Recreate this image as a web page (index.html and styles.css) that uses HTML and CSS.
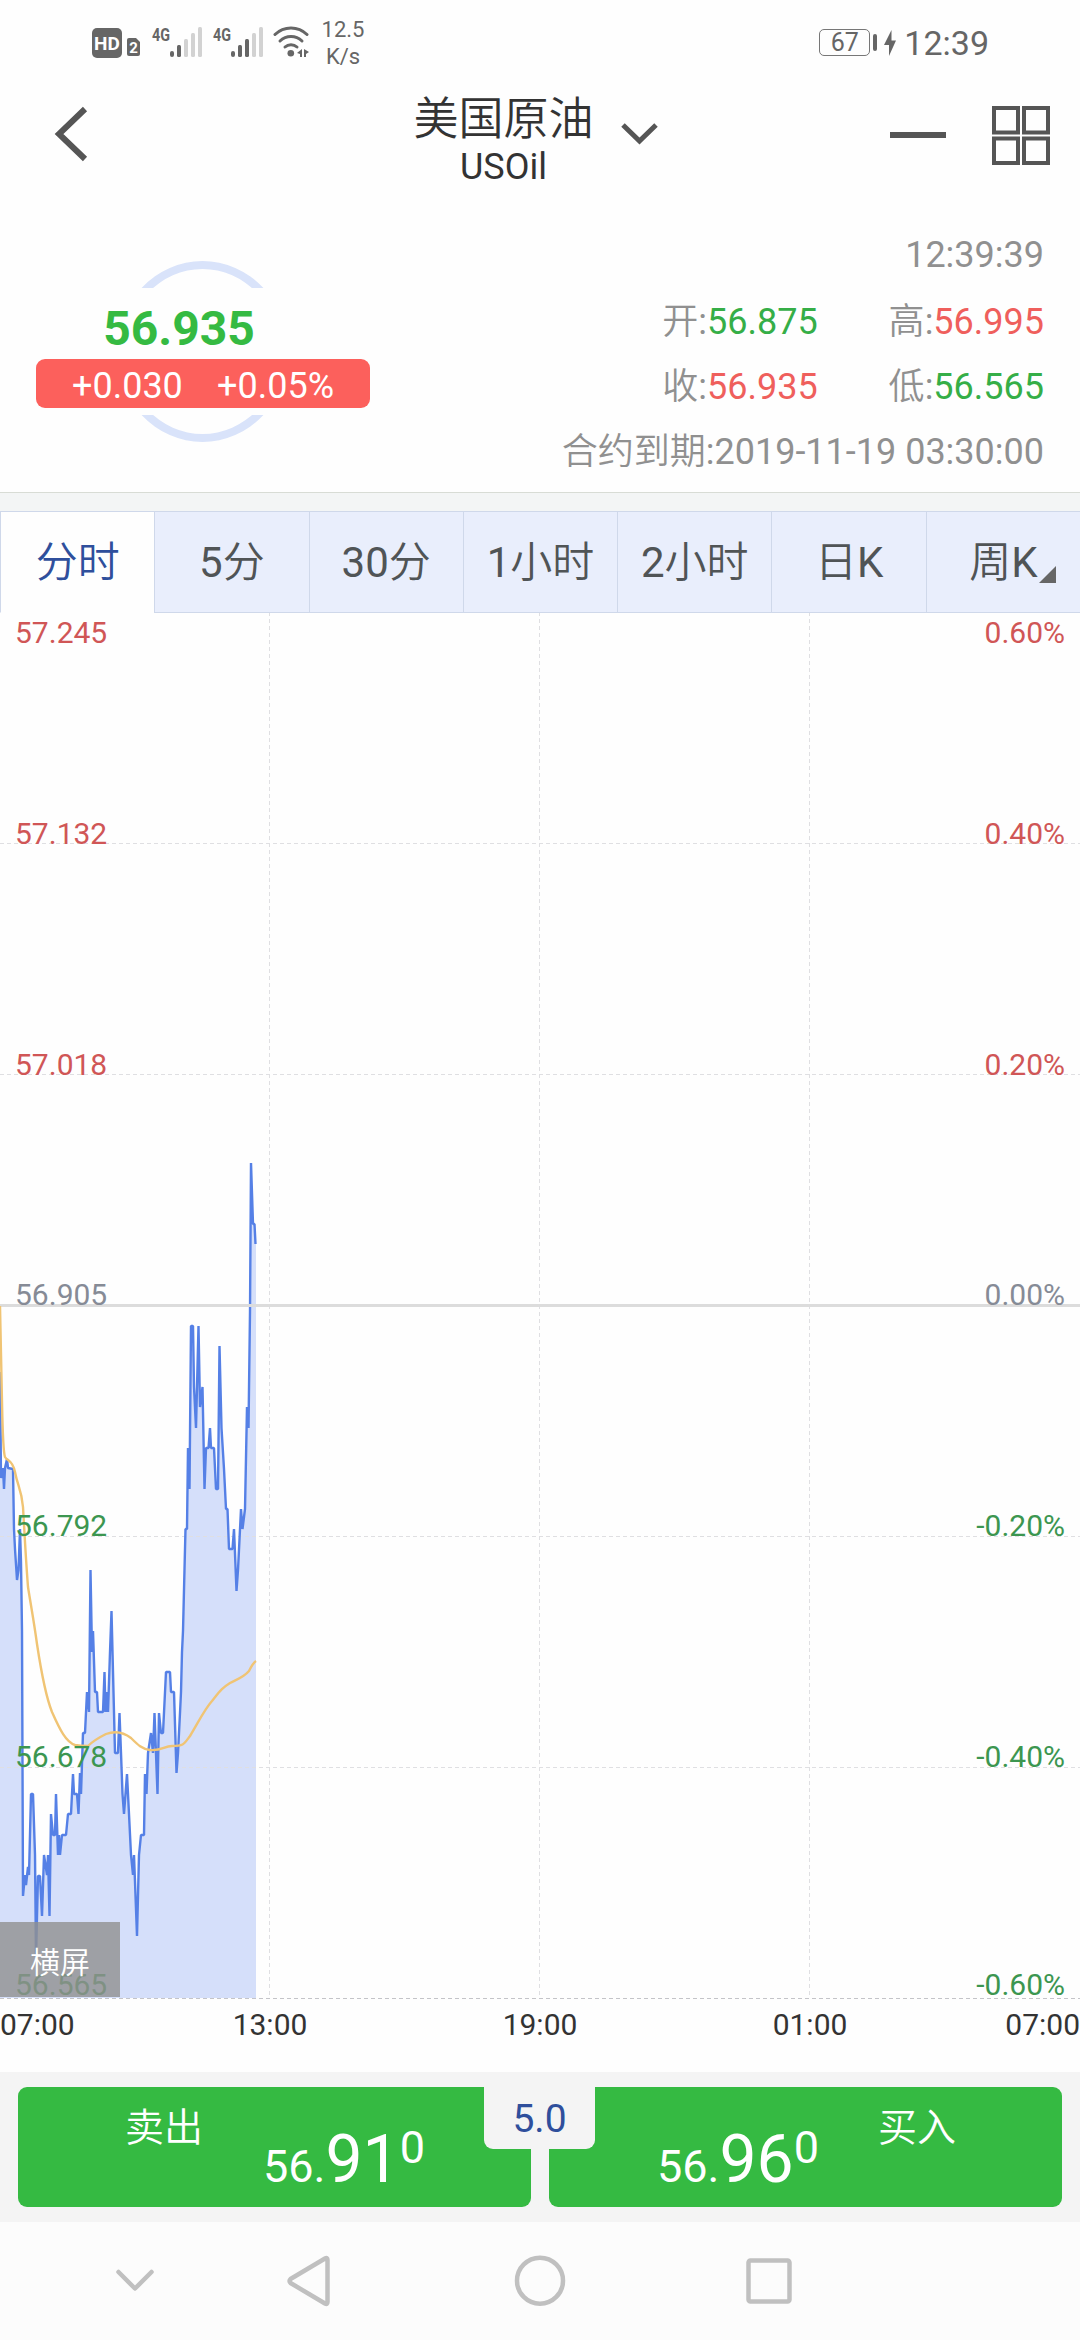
FILE: index.html
```html
<!DOCTYPE html>
<html lang="zh-CN">
<head>
    <meta charset="UTF-8">
    <meta name="viewport" content="width=device-width, initial-scale=1.0">
    <title>美国原油 USOil</title>
    <link rel="stylesheet" href="styles.css">
</head>
<body>

    <!-- Status bar -->
    <div class="status-bar">
        <div class="status-left">
            <span class="hd-badge">HD</span>
            <svg class="sim" width="13" height="18" viewBox="0 0 13 18">
                <path d="M2 0H9L13 4V16Q13 18 11 18H2Q0 18 0 16V2Q0 0 2 0Z" fill="#666"/>
                <text x="6.5" y="14.5" text-anchor="middle" class="sim-num">2</text>
            </svg>
            <svg class="signal" width="50" height="32" viewBox="0 0 50 32">
                <text x="0" y="15" class="net" textLength="18" lengthAdjust="spacingAndGlyphs">4G</text>
                <g fill="#666">
                    <rect x="18" y="25" width="4" height="6" rx="2"/>
                    <rect x="25" y="19" width="4" height="12" rx="1.5"/>
                </g>
                <g fill="#d2d2d2">
                    <rect x="32" y="13" width="4" height="18" rx="1.5"/>
                    <rect x="39" y="7" width="4" height="24" rx="1.5"/>
                    <rect x="46" y="1" width="4" height="30" rx="1.5"/>
                </g>
            </svg>
            <svg class="signal second" width="50" height="32" viewBox="0 0 50 32">
                <text x="0" y="15" class="net" textLength="18" lengthAdjust="spacingAndGlyphs">4G</text>
                <g fill="#666">
                    <rect x="18" y="25" width="4" height="6" rx="2"/>
                    <rect x="25" y="19" width="4" height="12" rx="1.5"/>
                    <rect x="32" y="13" width="4" height="18" rx="1.5"/>
                </g>
                <g fill="#d2d2d2">
                    <rect x="39" y="7" width="4" height="24" rx="1.5"/>
                    <rect x="46" y="1" width="4" height="30" rx="1.5"/>
                </g>
            </svg>
            <svg class="wifi" width="37" height="32" viewBox="0 0 37 32">
                <g fill="none" stroke="#666" stroke-width="3" stroke-linecap="round">
                    <path d="M2 8.500A23 23 0 0 1 34 8.500"/>
                    <path d="M7 15A16 16 0 0 1 29 15"/>
                    <path d="M12 21A9 9 0 0 1 24 21"/>
                </g>
                <circle cx="17.8" cy="27.3" r="3.3" fill="#666"/>
                <path d="M24 27L29 23V31H27V28ZM31 31V23L36 26L33 28V31Z" fill="#666"/>
            </svg>
            <div class="net-speed">12.5<br>K/s</div>
        </div>
        <div class="status-right">
            <span class="battery">67</span>
            <span class="battery-cap"></span>
            <svg class="bolt" width="12" height="26" viewBox="0 0 12 26"><path d="M7.5 0V10.5H12L5 26V15H0Z" fill="#666"/></svg>
            <span class="clock">12:39</span>
        </div>
    </div>

    <!-- Title bar -->
    <header class="header">
        <svg class="back" width="34" height="56" viewBox="0 0 34 56"><path d="M31 3L5 28L31 53" fill="none" stroke="#555" stroke-width="6"/></svg>
        <div class="symbol">
            <div class="symbol-names">
                <h1 class="cn">美国原油</h1>
                <p>USOil</p>
            </div>
            <svg class="symbol-arrow" width="37" height="22" viewBox="0 0 37 22"><path d="M2 2L18.500 18L35 2" fill="none" stroke="#555" stroke-width="5"/></svg>
        </div>
        <div class="header-actions">
            <span class="minus"></span>
            <svg width="58" height="60" viewBox="0 0 58 60">
                <g fill="none" stroke="#555" stroke-width="4">
                    <rect x="2" y="2" width="24" height="24.500"/>
                    <rect x="32" y="2" width="24" height="24.500"/>
                    <rect x="2" y="32.500" width="24" height="24.500"/>
                    <rect x="32" y="32.500" width="24" height="24.500"/>
                </g>
            </svg>
        </div>
    </header>

    <!-- Quote -->
    <section class="quote">
        <div class="quote-left">
            <div class="ring"></div>
            <div class="quote-now">
                <div class="price">56.935</div>
                <div class="change"><span>+0.030</span><span>+0.05%</span></div>
            </div>
        </div>
        <div class="quote-right">
            <div class="time">12:39:39</div>
            <div class="row">
                <div><span class="cn">开</span>:<b class="down">56.875</b></div>
                <div><span class="cn">高</span>:<b class="up">56.995</b></div>
            </div>
            <div class="row">
                <div><span class="cn">收</span>:<b class="up">56.935</b></div>
                <div><span class="cn">低</span>:<b class="down">56.565</b></div>
            </div>
            <div class="row"><div><span class="cn">合约到期</span>:2019-11-19 03:30:00</div></div>
        </div>
    </section>

    <!-- Period tabs -->
    <nav class="tabs">
        <a class="tab active"><span class="cn">分时</span></a>
        <a class="tab">5<span class="cn">分</span></a>
        <a class="tab">30<span class="cn">分</span></a>
        <a class="tab">1<span class="cn">小时</span></a>
        <a class="tab">2<span class="cn">小时</span></a>
        <a class="tab"><span class="cn">日</span>K</a>
        <a class="tab more"><span class="cn">周</span>K</a>
    </nav>

    <!-- Chart -->
    <main class="chart">
        <svg width="1080" height="1459" viewBox="0 1 1080 1459">
            <path class="area" id="area"/>
            <g class="grid">
                <path d="M0 231.500H1080M0 462.500H1080M0 924.500H1080M0 1155.500H1080"/>
                <path d="M269.500 0V1386M539.500 0V1386M809.500 0V1386"/>
                <path class="base" d="M0 1386.500H1080"/>
            </g>
            <path class="line" id="line"/>
            <path class="zero" d="M0 693.500H1080"/>
            <path class="avg" d="M0 694L2 790Q3 840 5 845C8 850 12 847 15 860C18 876 21 875 23 895C25 930 26 950 28 975C32 1000 34 1010 37 1032C42 1065 46 1085 52 1100C60 1118 66 1130 75 1133C80 1134 84 1134 88 1134C94 1128 100 1125 106 1122C114 1119 122 1119 131 1126C138 1133 142 1137 150 1138C162 1139 164 1134 172 1134C184 1134 184 1132 190 1124C198 1111 204 1098 212 1089C220 1079 222 1076 230 1071C238 1067 244 1065 249 1059Q253 1051 256 1049"/>
            <g class="y-axis">
                <g class="red">
                    <text x="15" y="31">57.245</text>
                    <text x="15" y="232">57.132</text>
                    <text x="15" y="463">57.018</text>
                </g>
                <text class="gray" x="15" y="693">56.905</text>
                <g class="green">
                    <text x="15" y="924">56.792</text>
                    <text x="15" y="1155">56.678</text>
                    <text x="15" y="1383">56.565</text>
                </g>
            </g>
            <g class="y-axis right">
                <g class="red">
                    <text x="1065" y="31">0.60%</text>
                    <text x="1065" y="232">0.40%</text>
                    <text x="1065" y="463">0.20%</text>
                </g>
                <text class="gray" x="1065" y="693">0.00%</text>
                <g class="green">
                    <text x="1065" y="924">-0.20%</text>
                    <text x="1065" y="1155">-0.40%</text>
                    <text x="1065" y="1383">-0.60%</text>
                </g>
            </g>
            <g class="x-axis">
                <text x="0" y="1423">07:00</text>
                <text x="270" y="1423" text-anchor="middle">13:00</text>
                <text x="540" y="1423" text-anchor="middle">19:00</text>
                <text x="810" y="1423" text-anchor="middle">01:00</text>
                <text x="1080" y="1423" text-anchor="end">07:00</text>
            </g>
        </svg>
        <button class="landscape cn">横屏</button>
    </main>

    <!-- Trade buttons -->
    <section class="trade">
        <div class="trade-btn sell">
            <span class="cn">卖出</span>
            <div class="trade-price">56.<big>91</big><sup>0</sup></div>
        </div>
        <div class="trade-btn buy">
            <div class="trade-price">56.<big>96</big><sup>0</sup></div>
            <span class="cn">买入</span>
        </div>
        <div class="spread">5.0</div>
    </section>

    <!-- System navigation -->
    <footer class="sys-nav">
        <svg width="1080" height="118" viewBox="0 0 1080 118">
            <g fill="none" stroke="#c0c0c0" stroke-width="4.500" stroke-linejoin="round" stroke-linecap="round">
                <path d="M118.500 50L135 66.500L151.500 50"/>
                <path d="M325 36.500Q327.500 35 327.500 38V80Q327.500 83 325 81.500L290.500 61Q288.500 59 290.500 57Z"/>
                <circle cx="540" cy="58.700" r="23"/>
                <rect x="748.500" y="38.500" width="41" height="41" rx="2"/>
            </g>
        </svg>
    </footer>

    <script>
        // Minute line: [x, y] pairs in chart coordinates
        const points = [
            [0,760],[1,866],[3,856],[4,877],[5,856],[7,847],[8,856],[13,857],[14,917],[15,937],[17,968],[18.5,958],[20,917],
            [21,950],[22,1019],[23,1284],[25,1263],[26,1273],[28,1255],[29,1263],[31,1182],[33,1182],[35,1243],[36,1345],
            [38,1264],[40,1264],[42,1304],[44,1243],[47,1263],[48,1243],[49.5,1304],[51,1202],[53,1223],[55,1223],[56,1182],
            [58,1243],[59,1223],[60,1243],[62,1223],[66,1223],[68,1202],[71,1202],[73,1162],[74,1182],[77,1182],[78.5,1202],
            [80,1161],[81,1182],[83,1121],[85,1121],[87,1080],[89,1100],[90.5,958],[92,1040],[93,1019],[95,1080],[97,1080],
            [98,1100],[103,1100],[104.5,1060],[105.5,1100],[107,1080],[108,1100],[110,1040],[111.5,999],[113,1060],[115,1141],
            [118,1141],[119.5,1101],[121,1141],[122.5,1182],[124,1202],[127,1162],[129,1202],[131,1243],[133,1263],[134,1243],
            [137,1324],[139,1243],[141,1223],[144,1223],[145,1162],[146.5,1182],[148,1141],[151,1121],[153,1141],[154.5,1101],
            [157.5,1182],[159,1101],[161,1121],[163,1121],[166,1060],[170,1060],[171,1080],[174,1080],[176.5,1161],[178,1141],
            [180,1101],[181,1080],[182,1040],[183,1019],[185,937],[185.5,917],[187,917],[188,836],[189.5,877],[191,714],
            [193,714],[194,775],[196,816],[198.5,714],[200,795],[202.5,775],[204.5,877],[206,836],[208.5,836],[210,816],
            [211,836],[214,836],[216,877],[218,877],[219.5,734],[221.5,816],[224,857],[226,897],[227.5,897],[229,937],
            [232.5,937],[234,917],[236.5,979],[238,958],[241,897],[242.5,917],[245,897],[247,795],[248.5,816],[250,700],
            [251,551],[253,612],[254.5,612],[255.5,632]
        ];

        const line = 'M' + points.map(p => p.join(' ')).join('L');
        document.getElementById('line').setAttribute('d', line);
        document.getElementById('area').setAttribute('d', line + 'H256V1386H0Z');
    </script>
</body>
</html>
```
FILE: styles.css
```css
:root {
    --green: #35ba42;
    --red: #fc605c;
    --blue: #2f4f9c;
    --dark: #555;
    --grey: #909090;
}

* {
    margin: 0;
    padding: 0;
    box-sizing: border-box;
}

body {
    width: 1080px;
    background-color: #fefefe;
    font-family: Roboto, "Noto Sans CJK SC", sans-serif;
    color: #333;
}

svg {
    display: block;
}

.cn {
    font-family: Roboto, "Noto Sans CJK SC", sans-serif;
    font-weight: 350;
}

/* Status bar */
.status-bar {
    height: 72px;
    display: flex;
    justify-content: space-between;
    padding: 0 92px;
    color: #666;
}

.status-left, .status-right {
    display: flex;
    align-items: flex-start;
}

.hd-badge {
    width: 30px;
    height: 30px;
    margin-top: 28px;
    border-radius: 5px;
    background-color: #666;
    color: #fff;
    font-size: 19px;
    font-weight: 700;
    line-height: 31px;
    text-align: center;
}

.sim {
    margin: 38px 12px 0 5px;
}

.sim-num {
    font-size: 15px;
    font-weight: 700;
    fill: #fff;
}

.net {
    font-size: 19px;
    font-weight: 700;
    fill: #666;
}

.signal {
    margin-top: 26px;
    overflow: visible;
}

.signal.second {
    margin-left: 11px;
}

.wifi {
    margin: 26px 0 0 10px;
}

.net-speed {
    width: 50px;
    margin: 16px 0 0 8px;
    font-size: 22px;
    line-height: 27px;
    text-align: center;
}

.status-right {
    margin-right: -1px;
}

.battery {
    width: 51px;
    height: 27px;
    margin-top: 29px;
    border: 1.500px solid #777;
    border-radius: 5px;
    font-size: 25px;
    line-height: 25px;
    text-align: center;
}

.battery-cap {
    width: 4px;
    height: 17px;
    margin: 34px 7px 0 3px;
    border-radius: 2px;
    background-color: #666;
}

.bolt {
    margin: 30px 8px 0 0;
}

.clock {
    margin-top: 22px;
    font-size: 34px;
    line-height: 42px;
}

/* Title bar */
.header {
    height: 149px;
    display: grid;
    grid-template-columns: 1fr auto 1fr;
    align-items: start;
    padding: 20px 30px 0 54px;
}

.back {
    margin-top: 14px;
}

.symbol {
    display: flex;
    margin-left: -24px;
}

.symbol-names {
    padding-top: 1px;
    text-align: center;
}

.symbol h1 {
    font-size: 45px;
    line-height: 53px;
}

.symbol p {
    font-size: 36px;
    line-height: 42px;
}

.symbol-arrow {
    margin: 31px 9px 0 27px;
}

.header-actions {
    display: flex;
    justify-content: flex-end;
    gap: 46px;
    padding-top: 14px;
}

.minus {
    width: 56px;
    height: 6px;
    margin-top: 26px;
    background-color: var(--dark);
}

/* Quote */
.quote {
    height: 272px;
    display: flex;
    justify-content: space-between;
    padding: 0 36px;
    border-bottom: 1px solid #d8dcd5;
}

.quote-left {
    position: relative;
    width: 334px;
    padding-top: 67px;
}

.ring {
    position: absolute;
    top: 40px;
    left: 81px;
    width: 171px;
    height: 181px;
    border: 8px solid #d9e3fa;
    border-radius: 50%;
}

.quote-now {
    position: relative;
    height: 127px;
    background-color: #fefefe;
}

.price {
    padding: 11px 48px 0 0;
    font-size: 48px;
    font-weight: 700;
    line-height: 60px;
    text-align: center;
    color: var(--green);
}

.change {
    display: flex;
    justify-content: space-between;
    height: 49px;
    padding: 0 36px;
    border-radius: 9px;
    background-color: var(--red);
    color: #fff;
    font-size: 36px;
    line-height: 54px;
}

.quote-right {
    color: var(--grey);
    font-size: 36px;
    line-height: 65px;
    text-align: right;
}

.quote-right .time {
    line-height: 69px;
}

.row {
    display: flex;
    justify-content: flex-end;
    gap: 71px;
}

.row b {
    font-weight: 400;
}

.up {
    color: #ef5f5c;
}

.down {
    color: #35ae47;
}

/* Period tabs */
.tabs {
    height: 120px;
    display: grid;
    grid-template-columns: repeat(7, 1fr);
    border-top: 18px solid #f3f5f5;
}

.tab {
    position: relative;
    height: 102px;
    border: 1px solid #cfd8ea;
    border-right: none;
    background-color: #e9eefc;
    color: #505456;
    font-size: 42px;
    line-height: 102px;
    text-align: center;
}

.tab.active {
    border-bottom-color: #fefefe;
    background-color: #fefefe;
    color: var(--blue);
}

.tab.more::after {
    content: "";
    position: absolute;
    right: 24px;
    bottom: 29px;
    border-left: 17px solid transparent;
    border-bottom: 17px solid #666;
}

/* Chart */
.chart {
    position: relative;
    height: 1459px;
}

.area {
    fill: #d5dffa;
}

.line {
    fill: none;
    stroke: #5580e6;
    stroke-width: 2.4;
    stroke-linejoin: bevel;
}

.avg {
    fill: none;
    stroke: #f0c474;
    stroke-width: 2.400;
}

.grid path {
    fill: none;
    stroke: #dfdfe2;
    stroke-width: 1;
    stroke-dasharray: 4 3;
}

.grid .base {
    stroke: #c4c4c8;
}

.zero {
    stroke: #dcdcdc;
    stroke-width: 3;
}

.y-axis, .x-axis {
    font-size: 30px;
}

.y-axis.right {
    text-anchor: end;
}

.y-axis .red {
    fill: #d05656;
}

.y-axis .gray {
    fill: #868b96;
}

.y-axis .green {
    fill: #3c9650;
}

.x-axis {
    fill: #333;
}

.landscape {
    position: absolute;
    left: 0;
    bottom: 75px;
    width: 120px;
    height: 75px;
    border: none;
    background-color: rgba(144, 144, 144, 0.8);
    color: #fff;
    font-size: 30px;
}

/* Trade buttons */
.trade {
    position: relative;
    height: 150px;
    display: grid;
    grid-template-columns: 1fr 1fr;
    gap: 18px;
    padding: 15px 18px;
    background-color: #f4f4f4;
}

.trade-btn {
    display: flex;
    height: 120px;
    border-radius: 9px;
    background-color: var(--green);
    color: #fff;
}

.trade-btn .cn {
    font-size: 39px;
    line-height: 56px;
    padding-top: 13px;
}

.trade-price {
    height: 120px;
    font-size: 45px;
    line-height: 120px;
    white-space: nowrap;
    padding-top: 20px;
}

.trade-price big {
    font-size: 66px;
    line-height: 1;
}

.trade-price sup {
    font-size: 45px;
    line-height: 1;
    vertical-align: 19px;
}

.sell {
    padding-left: 107px;
}

.sell .trade-price {
    margin-left: 60px;
}

.buy {
    padding-left: 108px;
}

.buy .trade-price {
    margin-right: 59px;
}

.spread {
    position: absolute;
    top: 0;
    left: 484px;
    width: 111px;
    height: 77px;
    border-radius: 0 0 9px 9px;
    background-color: #f4f4f4;
    color: var(--blue);
    font-size: 39px;
    line-height: 94px;
    text-align: center;
}

/* System navigation */
.sys-nav {
    height: 118px;
    background-color: #fcfcfc;
}
```
